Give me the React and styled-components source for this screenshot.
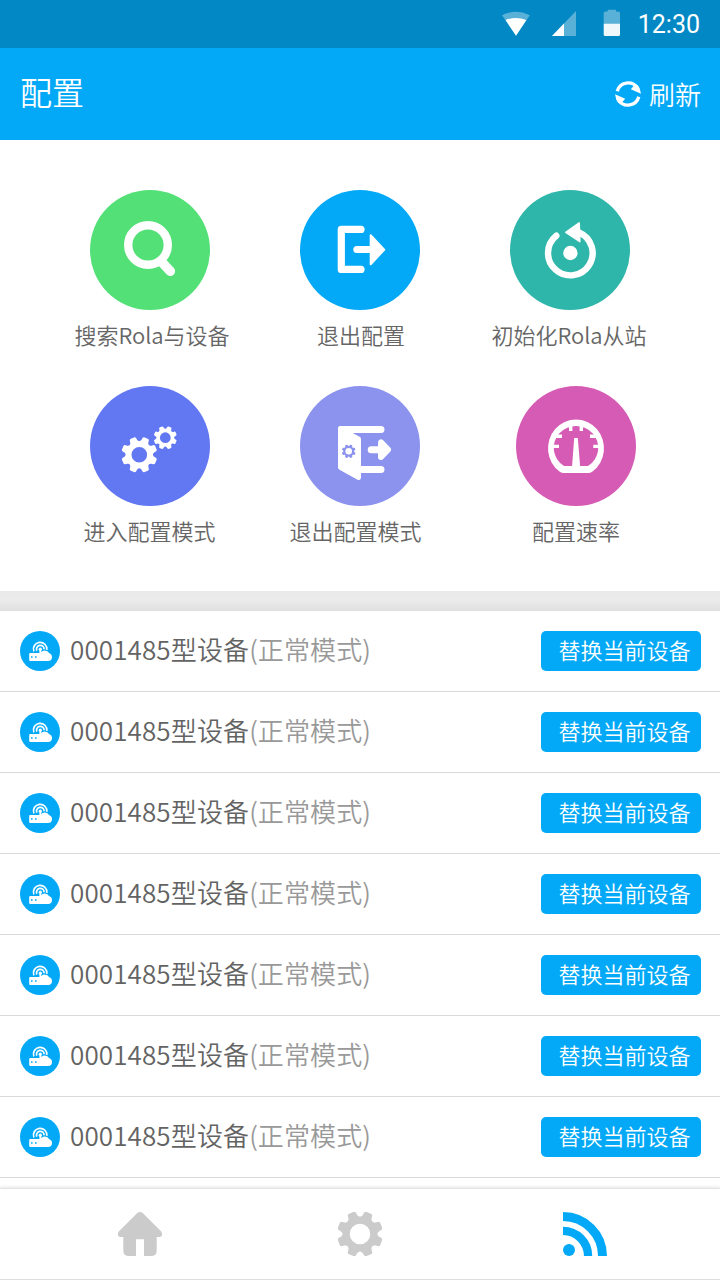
import React from "react";
import styled, { createGlobalStyle } from "styled-components";

const GlobalStyle = createGlobalStyle`
  * {
    box-sizing: border-box;
  }
  body {
    margin: 0;
    background-color: #fff;
    font-family: "Noto Sans CJK SC", "Noto Sans", sans-serif;
    font-weight: 350;
  }
`;

const Container = styled.div`
  width: 720px;
  height: 1280px;
  display: flex;
  flex-direction: column;
  overflow: hidden;
  background-color: #fff;
`;

const StatusBar = styled.div`
  height: 48px;
  flex-shrink: 0;
  display: flex;
  align-items: center;
  justify-content: flex-end;
  padding-right: 20px;
  background-color: #0288c4;
`;
const StatusIcons = styled.svg`
  width: 120px;
  height: 48px;
  margin-right: 16px;
  fill: white;
`;
const Time = styled.span`
  padding-top: 1px;
  font-family: Roboto, sans-serif;
  font-size: 25px;
  font-weight: 400;
  line-height: 48px;
  color: white;
`;

const Header = styled.header`
  height: 92px;
  flex-shrink: 0;
  display: flex;
  align-items: center;
  justify-content: space-between;
  padding: 0 19px 0 20px;
  background-color: #03a9f7;
  color: white;
`;
const Title = styled.h1`
  margin: 0 0 5px;
  font-size: 32px;
  font-weight: 350;
  line-height: 87px;
`;
const Refresh = styled.button`
  display: flex;
  align-items: center;
  gap: 8px;
  padding: 0;
  border: none;
  background: none;
  color: white;
  font: inherit;
  font-size: 26px;
  line-height: 40px;
`;
const RefreshText = styled.span`
  margin-bottom: 1px;
`;

const Actions = styled.div`
  height: 451px;
  flex-shrink: 0;
  display: grid;
  grid-template-columns: repeat(3, 210px);
  grid-auto-rows: 196px;
  justify-content: center;
  padding-top: 50px;
`;
const Action = styled.div`
  display: flex;
  flex-direction: column;
  align-items: center;
  padding-left: ${(props) => props.$shift || 0}px;
`;
const Circle = styled.div`
  width: 120px;
  height: 120px;
  border-radius: 50%;
  background-color: ${(props) => props.$color};
  color: ${(props) => props.$color};
`;
const Label = styled.span`
  margin-top: 8px;
  margin-left: ${(props) => props.$nudge || 0}px;
  font-size: 22px;
  line-height: 32px;
  white-space: nowrap;
  color: #666;
`;

const Divider = styled.div`
  height: 20px;
  flex-shrink: 0;
  background: linear-gradient(#e9e9e9, #ebebeb 50%, #dfdfdf);
`;

const List = styled.div`
  height: 577px;
  flex-shrink: 0;
`;
const Row = styled.div`
  height: 81px;
  display: flex;
  align-items: center;
  padding: 0 19px 0 20px;
  border-bottom: 1px solid #d9d9d9;
`;
const Device = styled.span`
  flex: 1;
  margin: 0 0 4px 10px;
  font-size: 26px;
  line-height: 40px;
  letter-spacing: 0.12px;
  color: #636363;
`;
const Mode = styled.span`
  color: #999;
`;
const Replace = styled.button`
  width: 160px;
  height: 40px;
  padding: 0 0 3px 7px;
  border: none;
  border-radius: 5px;
  background-color: #03a9f7;
  color: white;
  font: inherit;
  font-size: 22px;
  line-height: 37px;
`;

const Nav = styled.nav`
  flex: 1;
  display: grid;
  grid-template-columns: 220px 225px 44px;
  align-items: start;
  padding: 23px 0 0 118px;
  border-top: 1px solid #e4e4e4;
  border-bottom: 1px solid #dedede;
  box-shadow: 0 -1px 3px rgba(0, 0, 0, 0.1);
  color: #cbcbcb;
`;

const point = (cx, cy, r, deg) => {
  const a = (deg * Math.PI) / 180;
  return `${(cx + r * Math.cos(a)).toFixed(2)} ${(cy + r * Math.sin(a)).toFixed(2)}`;
};

// eight rounded teeth with scooped valleys, hole is cut by evenodd
const gearPath = (cx, cy, r, hole) => {
  let d = "";
  for (let i = 0; i < 8; i++) {
    const a = i * 45 + 22.5;
    d += `${i ? "L" : "M"}${point(cx, cy, r * 0.88, a - 13)}`;
    d += `Q${point(cx, cy, r, a - 11.5)} ${point(cx, cy, r, a - 7)}`;
    d += `L${point(cx, cy, r, a + 7)}`;
    d += `Q${point(cx, cy, r, a + 11.5)} ${point(cx, cy, r * 0.88, a + 13)}`;
    d += `C${point(cx, cy, r * 0.72, a + 17)} ${point(cx, cy, r * 0.72, a + 28)} ${point(cx, cy, r * 0.88, a + 32)}`;
  }
  d += `ZM${cx - hole} ${cy}a${hole} ${hole} 0 1 0 ${hole * 2} 0a${hole} ${hole} 0 1 0 ${-hole * 2} 0Z`;
  return d;
};

const Gear = ({ cx, cy, r, hole, fill }) => (
  <path d={gearPath(cx, cy, r, hole)} fill={fill} fillRule="evenodd" />
);

const ActionSvg = ({ children }) => (
  <svg width="120" height="120" viewBox="0 0 120 120" fill="none" stroke="none">
    {children}
  </svg>
);

const SearchIcon = () => (
  <ActionSvg>
    <circle cx="58" cy="55" r="19.8" stroke="#fff" strokeWidth="8.4" />
    <path d="M71.5 71.8l8.8 9.5" stroke="#fff" strokeWidth="9.6" strokeLinecap="round" />
  </ActionSvg>
);

const ExitIcon = () => (
  <ActionSvg>
    <path d="M61 39.4H41.3V79.4H61" stroke="#fff" strokeWidth="7.2" strokeLinecap="round" strokeLinejoin="round" />
    <path d="M56.8 59.6H72" stroke="#fff" strokeWidth="7" strokeLinecap="round" />
    <path d="M70.7 45.2V74.2L84.2 59.7Z" fill="#fff" stroke="#fff" strokeWidth="2" strokeLinejoin="round" />
  </ActionSvg>
);

const ResetIcon = () => (
  <ActionSvg>
    <circle cx="60.4" cy="63" r="7.2" fill="#fff" />
    <path d="M46.3 45.7A22.3 22.3 0 1 0 69 42.5" stroke="#fff" strokeWidth="6.4" strokeLinecap="round" />
    <path d="M55.8 42.3L69.2 33L69.8 51.6Z" fill="#fff" stroke="#fff" strokeWidth="1.6" strokeLinejoin="round" />
  </ActionSvg>
);

const GearsIcon = () => (
  <ActionSvg>
    <Gear cx={49.3} cy={68.7} r={18.1} hole={7.8} fill="#fff" />
    <Gear cx={75.3} cy={51.7} r={11.7} hole={5.4} fill="#fff" />
  </ActionSvg>
);

const DoorIcon = () => (
  <ActionSvg>
    <path
      d="M40 40H81a3.5 3.5 0 0 1 0 7H52.7L60 51Q61 51.6 61 53V80H81a3.5 3.5 0 0 1 0 7H61V91.5Q60.8 94.5 58 94L39.5 83.8Q38 83 38 81.5V42Q38 40 40 40Z"
      fill="#fff"
    />
    <Gear cx={48.7} cy={65.3} r={6.9} hole={3.3} fill="currentColor" />
    <path d="M71.2 63.7H82" stroke="#fff" strokeWidth="7" strokeLinecap="round" />
    <path d="M81 56.4V71L88 63.7Z" fill="#fff" stroke="#fff" strokeWidth="6" strokeLinejoin="round" />
  </ActionSvg>
);

const GaugeIcon = () => (
  <ActionSvg>
    <path
      fillRule="evenodd"
      fill="#fff"
      d="M47 87Q45 87 43.5 85.6A28 28.8 0 1 1 76.5 85.6Q75 87 73 87ZM48 80H72A22.3 21.7 0 1 0 48 80Z"
    />
    <path
      d="M54.7 36V45M65.3 36V45M36 50.2H46M84 50.2H74M34 60.4H43M86 60.4H77.3"
      stroke="#fff"
      strokeWidth="3.4"
    />
    <path d="M58.2 52H61.8L64.2 81H56Z" fill="#fff" />
  </ActionSvg>
);

const RouterIcon = () => (
  <svg width="40" height="40" viewBox="0 0 40 40">
    <circle cx="20" cy="20" r="20" fill="#03a9f7" />
    <path
      d="M10.3 22H20.5Q21.5 19.4 24.8 19.4Q28 19.4 29 22Q32 23 32 26Q32 30 28 30H10.3Q9.2 30 9.2 29V23Q9.2 22 10.3 22Z"
      fill="#fff"
    />
    <path d="M13.9 20.4A6.7 6.7 0 1 1 26.8 18.8M16.8 19.6A3.8 3.8 0 1 1 24.1 18.2" fill="none" stroke="#fff" strokeWidth="1.7" />
    <circle cx="20.3" cy="18.2" r="1.6" fill="#fff" />
    <path d="M20.3 18V23" stroke="#fff" strokeWidth="1.8" />
    <path d="M11 26h1.6M15 26h1.6" stroke="#03a9f7" strokeWidth="1.6" />
  </svg>
);

const RefreshIcon = () => (
  <svg width="26" height="26" viewBox="0 0 26 26" fill="none">
    <g id="half">
      <path d="M2.2 10.2A11.3 11.3 0 0 1 22.5 6.9" stroke="#fff" strokeWidth="3.3" />
      <path d="M15.8 8.2L18.6 5L22.4 4L24.6 7L26 12.8Z" fill="#fff" />
    </g>
    <use href="#half" transform="rotate(180 13 13)" />
  </svg>
);

const HomeIcon = () => (
  <svg width="44" height="44" viewBox="0 0 44 44">
    <path
      d="M18.8 1.5Q22 -1.4 25.2 1.5L43 19.3Q44.2 20.6 44 23Q43.7 25 41.5 25H38.7V38.5Q38.7 44 33 44H26V27.2H18V44H11Q5.3 44 5.3 38.5V25H2.5Q.3 25 0 23Q-.2 20.6 1 19.3Z"
      fill="currentColor"
    />
  </svg>
);

const SettingsIcon = () => (
  <svg width="44" height="44" viewBox="0 0 44 44">
    <Gear cx={22} cy={22} r={23.1} hole={10.3} fill="currentColor" />
  </svg>
);

const SignalIcon = () => (
  <svg width="44" height="44" viewBox="0 0 44 44" fill="none" stroke="#03a9f7">
    <path d="M0 4.5A39.5 39.5 0 0 1 39.5 44" strokeWidth="9" />
    <path d="M0 18.9A25.1 25.1 0 0 1 25.1 44" strokeWidth="8.3" />
    <circle cx="6" cy="38" r="6" fill="#03a9f7" stroke="none" />
  </svg>
);

const actions = [
  { label: "搜索Rola与设备", color: "#53e076", icon: <SearchIcon />, nudge: 4 },
  { label: "退出配置", color: "#03a9f7", icon: <ExitIcon />, nudge: 2 },
  { label: "初始化Rola从站", color: "#2eb6aa", icon: <ResetIcon />, nudge: -2 },
  { label: "进入配置模式", color: "#6277f2", icon: <GearsIcon />, nudge: -1 },
  { label: "退出配置模式", color: "#8b93ef", icon: <DoorIcon />, nudge: -9 },
  { label: "配置速率", color: "#d65bb5", icon: <GaugeIcon />, shift: 12 },
];

const devices = Array(7).fill({ name: "0001485型设备", mode: "(正常模式)" });

const App = () => {
  return (
    <Container>
      <GlobalStyle />
      <StatusBar>
        <StatusIcons viewBox="502 0 120 48">
          <path d="M502 15.2Q516 8.4 529.8 15.2L516 35.8Z" opacity=".35" />
          <path d="M505.6 20Q516 15.8 526.4 20L516 35.8Z" />
          <path d="M576 11V36H552Z" opacity=".35" />
          <path d="M564 23.5V36H552Z" />
          <path d="M603.7 24V13Q603.7 11.5 605.2 11.5H607.7V9.7H616V11.5H618.5Q620 11.5 620 13V24Z" opacity=".35" />
          <path d="M603.7 23.8H620V34.5Q620 36 618.5 36H605.2Q603.7 36 603.7 34.5Z" opacity=".94" />
        </StatusIcons>
        <Time>12:30</Time>
      </StatusBar>
      <Header>
        <Title>配置</Title>
        <Refresh>
          <RefreshIcon />
          <RefreshText>刷新</RefreshText>
        </Refresh>
      </Header>
      <Actions>
        {actions.map((item) => (
          <Action key={item.label} $shift={item.shift}>
            <Circle $color={item.color}>{item.icon}</Circle>
            <Label $nudge={item.nudge}>{item.label}</Label>
          </Action>
        ))}
      </Actions>
      <Divider />
      <List>
        {devices.map((device, i) => (
          <Row key={i}>
            <RouterIcon />
            <Device>
              {device.name}
              <Mode>{device.mode}</Mode>
            </Device>
            <Replace>替换当前设备</Replace>
          </Row>
        ))}
      </List>
      <Nav>
        <HomeIcon />
        <SettingsIcon />
        <SignalIcon />
      </Nav>
    </Container>
  );
};

export default App;
